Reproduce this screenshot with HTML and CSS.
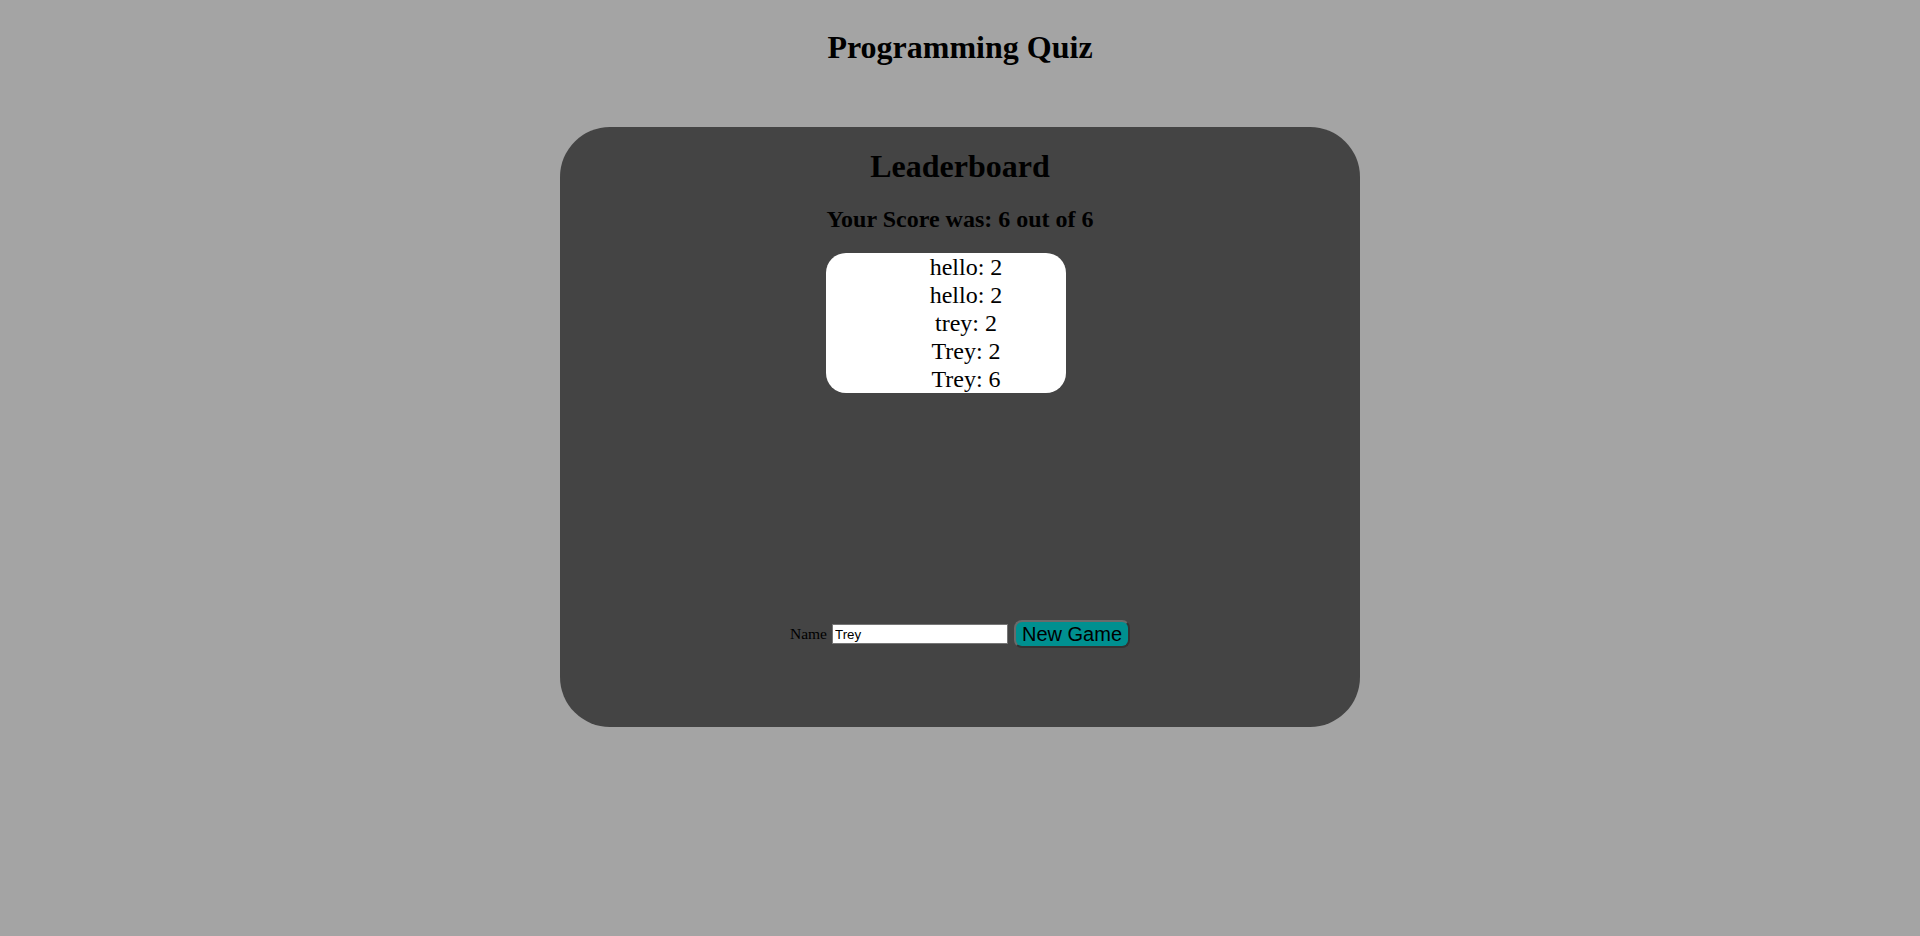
FILE: index.html
```html
<!DOCTYPE html>
<html>
<head>
<meta charset="utf-8">
<title>Programming Quiz</title>
<link rel="stylesheet" href="styles.css">
</head>
<body>
<h1 class="page-title">Programming Quiz</h1>
<main class="card">
  <h1 class="card-title">Leaderboard</h1>
  <h2 class="score">Your Score was: 6 out of 6</h2>
  <ul class="scores">
    <li>hello: 2</li>
    <li>hello: 2</li>
    <li>trey: 2</li>
    <li>Trey: 2</li>
    <li>Trey: 6</li>
  </ul>
  <form class="entry">
    <label class="name-label" for="name">Name</label>
    <input class="name-input" id="name" type="text" value="Trey">
    <button class="new-game" type="button">New Game</button>
  </form>
</main>
</body>
</html>
```

FILE: styles.css
```css
html, body {
  background: #a4a4a4;
}
body {
  margin: 8px;
  font-family: "Liberation Serif", "Times New Roman", serif;
  color: #000;
}
.page-title {
  text-align: center;
  font-size: 32px;
  margin: 21px 0 0;
}
.card {
  display: flow-root;
  box-sizing: border-box;
  width: 800px;
  height: 600px;
  margin: 61px auto 0;
  background: #444444;
  border-radius: 50px;
  text-align: center;
}
.card-title {
  font-size: 32px;
  margin: 21px 0 21px;
}
.score {
  font-size: 24px;
  margin: 0 0 20px;
}
.scores {
  list-style: none;
  width: 200px;
  margin: 0 0 0 266px;
  padding: 0 0 0 40px;
  background: #fff;
  border-radius: 20px;
  font-size: 24px;
  line-height: 28px;
  text-align: center;
}
.entry {
  display: flex;
  justify-content: center;
  align-items: center;
  margin-top: 227px;
}
.name-label {
  font-size: 15.5px;
  margin-right: 5px;
}
.name-input {
  box-sizing: border-box;
  width: 176px;
  height: 20px;
  padding: 1px 2px;
  border: 1px solid #767676;
  font-family: "Liberation Sans", Arial, sans-serif;
  font-size: 13.33px;
  color: #000;
  background: #fff;
}
.new-game {
  margin-left: 6px;
  height: 28px;
  padding: 0 6px;
  border: 2px solid #6a6a6a;
  border-right-color: #333333;
  border-bottom-color: #333333;
  border-radius: 8px;
  background: #009090;
  font-family: "Liberation Sans", Arial, sans-serif;
  font-size: 20px;
  color: #000;
  line-height: 22px;
}
```
